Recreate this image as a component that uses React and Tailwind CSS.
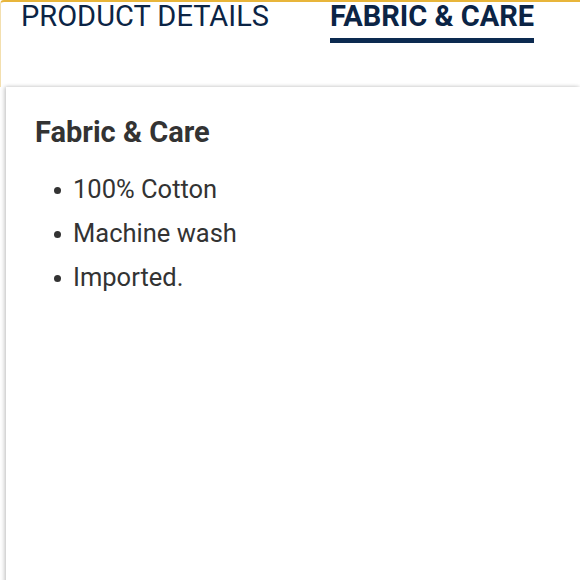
import React from 'react';

const items = ['100% Cotton', 'Machine wash', 'Imported.'];

export default function App() {
  return (
    <div className="w-[580px] h-[580px] overflow-hidden bg-white" style={{ fontFamily: 'Roboto, "Liberation Sans", sans-serif' }}>
      <div className="h-[87px] border-t-2 border-l border-[#e8b53a] border-l-[#f3dfae] rounded-tl-sm flex items-start">
        <div className="ml-[20px] -mt-[3px] text-[29px] leading-[34px] text-[#0b2445]">PRODUCT DETAILS</div>
        <div className="ml-[61px] -mt-[3px] flex flex-col">
          <div className="text-[29px] leading-[34px] font-bold text-[#0b2445]">FABRIC &amp; CARE</div>
          <div className="h-[5px] mt-[5px] bg-[#0c2a50]" />
        </div>
      </div>
      <div className="ml-[6px] h-[500px] bg-white shadow-[-2px_0_4px_rgba(0,0,0,0.18),0_-1px_3px_rgba(0,0,0,0.08)] pl-[29px] pt-[26px]">
        <h2 className="text-[29px] leading-[38px] font-bold text-[#333333]">Fabric &amp; Care</h2>
        <ul className="mt-[16px] pl-[38px] text-[25.5px] leading-[44px] text-[#333333]">
          {items.map((it) => (
            <li key={it} className="flex items-center">
              <span className="shrink-0 w-[7px] h-[7px] rounded-full bg-[#333333] -ml-[19px] mr-[12px] mt-[2px]" />
              {it}
            </li>
          ))}
        </ul>
      </div>
    </div>
  );
}
